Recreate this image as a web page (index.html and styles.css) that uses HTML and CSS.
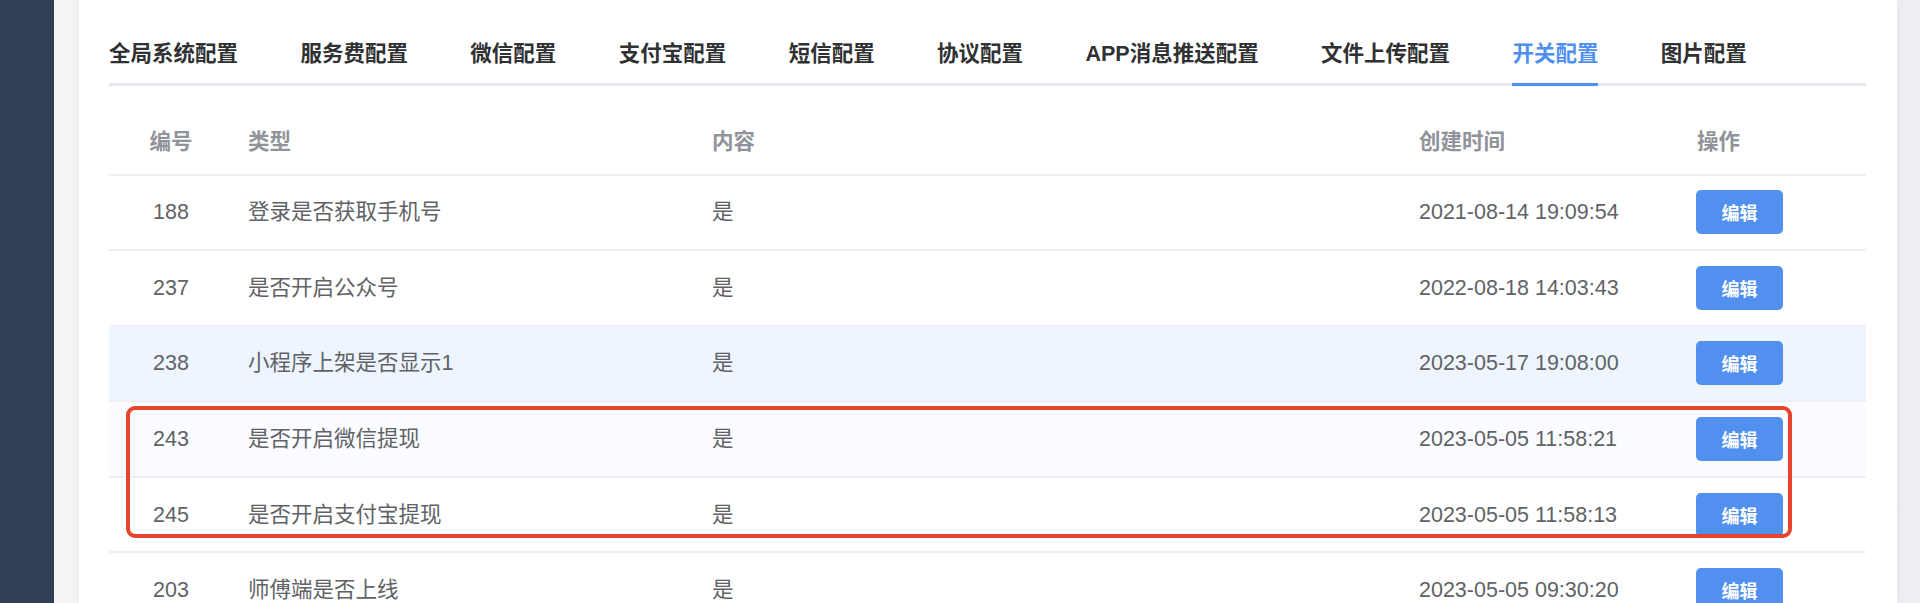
FILE: index.html
```html
<!DOCTYPE html>
<html lang="zh-CN">
<head>
<meta charset="utf-8">
<title>开关配置</title>
<link rel="stylesheet" href="styles.css">
</head>
<body>
<div class="layout">
  <aside class="sidebar"></aside>
  <main class="main">
    <section class="card">
      <nav class="tabs">
        <div class="tab">全局系统配置</div>
        <div class="tab">服务费配置</div>
        <div class="tab">微信配置</div>
        <div class="tab">支付宝配置</div>
        <div class="tab">短信配置</div>
        <div class="tab">协议配置</div>
        <div class="tab">APP消息推送配置</div>
        <div class="tab">文件上传配置</div>
        <div class="tab active">开关配置</div>
        <div class="tab">图片配置</div>
      </nav>
      <div class="table">
        <div class="row head">
          <div class="cell center">编号</div>
          <div class="cell">类型</div>
          <div class="cell">内容</div>
          <div class="cell">创建时间</div>
          <div class="cell">操作</div>
        </div>
        <div class="row">
          <div class="cell center">188</div>
          <div class="cell">登录是否获取手机号</div>
          <div class="cell">是</div>
          <div class="cell">2021-08-14 19:09:54</div>
          <div class="cell"><button class="btn">编辑</button></div>
        </div>
        <div class="row">
          <div class="cell center">237</div>
          <div class="cell">是否开启公众号</div>
          <div class="cell">是</div>
          <div class="cell">2022-08-18 14:03:43</div>
          <div class="cell"><button class="btn">编辑</button></div>
        </div>
        <div class="row hover">
          <div class="cell center">238</div>
          <div class="cell">小程序上架是否显示1</div>
          <div class="cell">是</div>
          <div class="cell">2023-05-17 19:08:00</div>
          <div class="cell"><button class="btn">编辑</button></div>
        </div>
        <div class="row stripe">
          <div class="cell center">243</div>
          <div class="cell">是否开启微信提现</div>
          <div class="cell">是</div>
          <div class="cell">2023-05-05 11:58:21</div>
          <div class="cell"><button class="btn">编辑</button></div>
        </div>
        <div class="row">
          <div class="cell center">245</div>
          <div class="cell">是否开启支付宝提现</div>
          <div class="cell">是</div>
          <div class="cell">2023-05-05 11:58:13</div>
          <div class="cell"><button class="btn">编辑</button></div>
        </div>
        <div class="row">
          <div class="cell center">203</div>
          <div class="cell">师傅端是否上线</div>
          <div class="cell">是</div>
          <div class="cell">2023-05-05 09:30:20</div>
          <div class="cell"><button class="btn">编辑</button></div>
        </div>
        <div class="highlight"></div>
      </div>
    </section>
  </main>
</div>
</body>
</html>
```

FILE: styles.css
```css
html, body {
  margin: 0;
  padding: 0;
  height: 603px;
  overflow: hidden;
  background: #f0f2f5;
  font-family: "Liberation Sans", "Noto Sans CJK SC", sans-serif;
}

.layout {
  display: flex;
  height: 603px;
}

.sidebar {
  width: 54px;
  flex: none;
  background: #304155;
}

.main {
  flex: 1;
  display: flex;
  padding: 0 23px 0 25px;
  background: linear-gradient(to right, #f3f4f6, #eceef1);
}

.card {
  flex: 1;
  background: #ffffff;
  padding: 26px 31px 0 30px;
  box-shadow: 0 0 10px rgba(0, 0, 0, 0.05);
}

.tabs {
  display: flex;
  border-bottom: 3px solid #e4e7ed;
  height: 57px;
}

.tab {
  font-size: 21.5px;
  font-weight: 700;
  color: #303133;
  line-height: 57px;
  height: 57px;
  margin-right: 62.4px;
  border-bottom: 3px solid transparent;
  white-space: nowrap;
}

.tab.active {
  color: #4f8ff0;
  border-bottom-color: #4f8ff0;
}

.table {
  position: relative;
  margin-top: 23.5px;
}

.row {
  display: grid;
  grid-template-columns: 124px 464px 707px 278px 1fr;
  height: 75.6px;
  box-sizing: border-box;
  border-bottom: 2px solid #eef0f4;
  align-items: center;
  font-size: 21.5px;
  color: #606266;
}

.row.head {
  height: 66px;
  color: #909399;
  font-weight: 700;
}

.row.hover {
  background: #eef5fe;
}

.row.stripe {
  background: #fafcff;
}

.cell {
  padding: 0 15px;
  line-height: 30px;
  white-space: nowrap;
}

.cell.center {
  text-align: center;
}

.btn {
  width: 87px;
  height: 44px;
  border: none;
  border-radius: 5px;
  background: #5190ee;
  color: #ffffff;
  font-family: "Liberation Sans", "Noto Sans CJK SC", sans-serif;
  font-size: 18px;
  font-weight: 700;
  padding: 0;
  margin-left: -1px;
}

.highlight {
  position: absolute;
  left: 17px;
  top: 296px;
  width: 1666px;
  height: 132px;
  box-sizing: border-box;
  border: 4px solid #e8432d;
  border-radius: 9px;
  pointer-events: none;
}
```
